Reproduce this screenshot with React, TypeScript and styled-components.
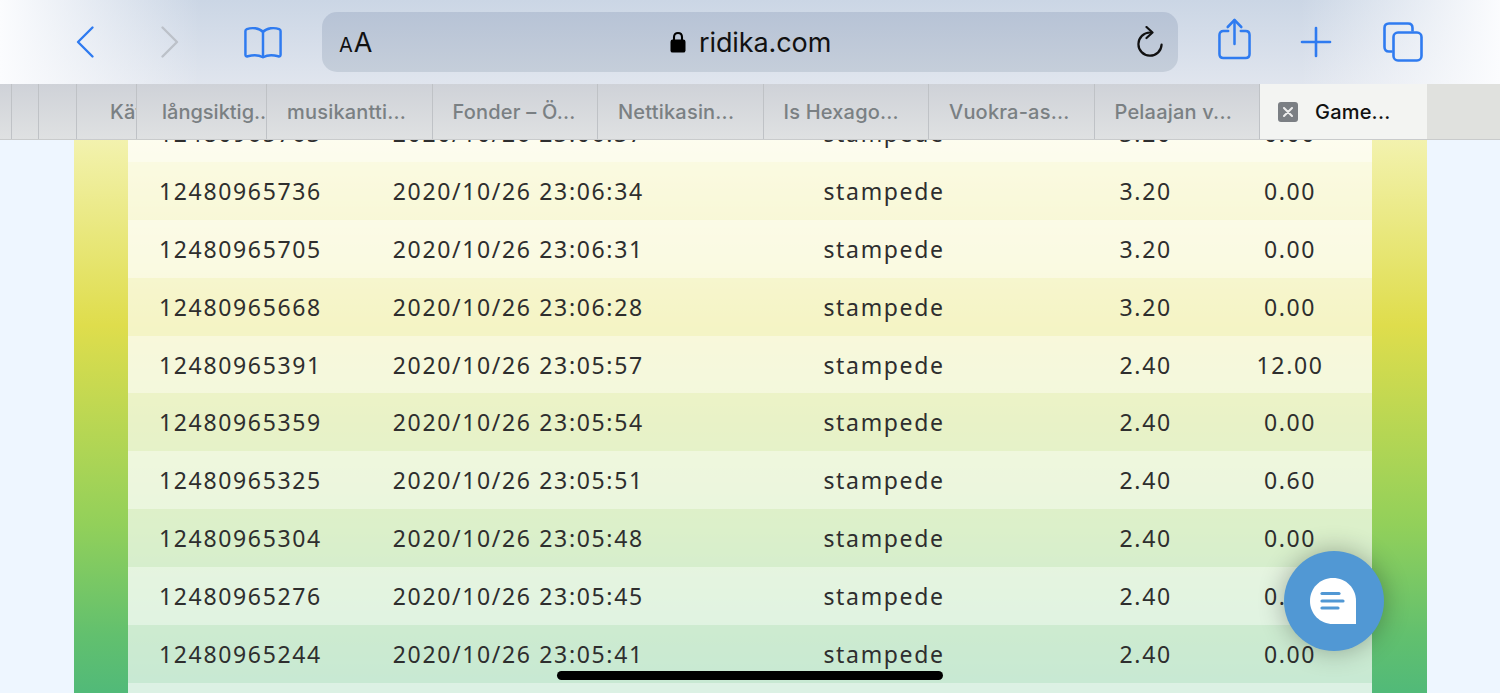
import React from 'react';
import styled, { createGlobalStyle } from 'styled-components';

const GlobalStyle = createGlobalStyle`
  html, body {
    margin: 0;
    padding: 0;
    height: 100%;
    overflow: hidden;
    background: #eef6ff;
  }
`;

const systemFont = '"Inter", "Liberation Sans", sans-serif';

const rows = [
  ['12480965763', '2020/10/26 23:06:37', 'stampede', '3.20', '0.00'],
  ['12480965736', '2020/10/26 23:06:34', 'stampede', '3.20', '0.00'],
  ['12480965705', '2020/10/26 23:06:31', 'stampede', '3.20', '0.00'],
  ['12480965668', '2020/10/26 23:06:28', 'stampede', '3.20', '0.00'],
  ['12480965391', '2020/10/26 23:05:57', 'stampede', '2.40', '12.00'],
  ['12480965359', '2020/10/26 23:05:54', 'stampede', '2.40', '0.00'],
  ['12480965325', '2020/10/26 23:05:51', 'stampede', '2.40', '0.60'],
  ['12480965304', '2020/10/26 23:05:48', 'stampede', '2.40', '0.00'],
  ['12480965276', '2020/10/26 23:05:45', 'stampede', '2.40', '0.00'],
  ['12480965244', '2020/10/26 23:05:41', 'stampede', '2.40', '0.00'],
  ['', '', '', '', ''],
];

const tabs = ['långsiktig..', 'musikantti...', 'Fonder – Ö...', 'Nettikasin...', 'Is Hexago...', 'Vuokra-as...', 'Pelaajan v...'];

const BackIcon = () => (
  <svg width="20" height="34" viewBox="0 0 20 34" fill="none" stroke="#2f7bf0" strokeWidth="2.4" strokeLinecap="round" strokeLinejoin="round">
    <path d="M16.5 2.5 L2 17 L16.5 31.5" />
  </svg>
);

const ForwardIcon = () => (
  <svg width="20" height="34" viewBox="0 0 20 34" fill="none" stroke="#bcc1c9" strokeWidth="2.4" strokeLinecap="round" strokeLinejoin="round">
    <path d="M3.5 2.5 L18 17 L3.5 31.5" />
  </svg>
);

const BookIcon = () => (
  <svg width="38" height="33" viewBox="0 0 40 34" fill="none" stroke="#2f7bf0" strokeWidth="2.6" strokeLinecap="round" strokeLinejoin="round">
    <path d="M20 6 C16 1.5 8 1 3 3 C2 3.4 1.5 4 1.5 5 L1.5 30 C1.5 31.5 2.5 32 4 31.5 C9 30 15.5 30 20 32.5 C24.5 30 31 30 36 31.5 C37.5 32 38.5 31.5 38.5 30 L38.5 5 C38.5 4 38 3.4 37 3 C32 1 24 1.5 20 6 Z" />
    <path d="M20 6 L20 32" />
  </svg>
);

const LockIcon = () => (
  <svg width="16" height="22" viewBox="0 0 16 22">
    <path d="M4 9 V6.2 C4 3.4 5.7 2 8 2 C10.3 2 12 3.4 12 6.2 V9" fill="none" stroke="#000" strokeWidth="2.1" />
    <rect x="0.5" y="8.6" width="15" height="13" rx="2.2" fill="#000" />
  </svg>
);

const ReloadIcon = () => (
  <svg width="28" height="32" viewBox="0 0 28 32" fill="none" stroke="#111" strokeWidth="2.2" strokeLinecap="round" strokeLinejoin="round">
    <path d="M14 6.5 A11.6 11.6 0 1 0 25.6 18.6" />
    <path d="M10.5 1 L16.5 6.5 L10.5 12" />
  </svg>
);

const ShareIcon = () => (
  <svg width="33" height="42" viewBox="0 0 34 42" preserveAspectRatio="none" fill="none" stroke="#2f7bf0" strokeWidth="2.6" strokeLinecap="round" strokeLinejoin="round">
    <path d="M10.5 13 H5.5 C3 13 1.5 14.5 1.5 17 V36 C1.5 38.6 3 40 5.5 40 H28.5 C31 40 32.5 38.6 32.5 36 V17 C32.5 14.5 31 13 28.5 13 H23.5" />
    <path d="M17 26 V2.5" />
    <path d="M10 9 L17 2 L24 9" />
  </svg>
);

const PlusIcon = () => (
  <svg width="32" height="32" viewBox="0 0 32 32" fill="none" stroke="#2f7bf0" strokeWidth="2.6" strokeLinecap="round">
    <path d="M16 2 V30" />
    <path d="M2 16 H30" />
  </svg>
);

const TabsIcon = () => (
  <svg width="40" height="40" viewBox="0 0 40 40" fill="none" stroke="#2f7bf0" strokeWidth="2.6" strokeLinejoin="round">
    <path d="M9.5 29.5 H6 C3 29.5 1.5 28 1.5 25 V6 C1.5 3 3 1.5 6 1.5 H25 C28 1.5 29.5 3 29.5 6 V9.5" />
    <rect x="10.5" y="10.5" width="28" height="28" rx="4.5" />
  </svg>
);

const ChatIcon = () => (
  <svg width="46" height="46" viewBox="0 0 46 46">
    <path d="M23 0 C36 0 46 10 46 23 V46 H23 C10 46 0 36 0 23 C0 10 10 0 23 0 Z" fill="#fff" />
    <path d="M12 15.5 H29" stroke="#5198d4" strokeWidth="3.2" strokeLinecap="round" />
    <path d="M12 23 H33" stroke="#5198d4" strokeWidth="3.2" strokeLinecap="round" />
    <path d="M12 30 H28" stroke="#5198d4" strokeWidth="3.2" strokeLinecap="round" />
  </svg>
);

export default function App() {
  return (
    <Page>
      <GlobalStyle />
      <Column>
        <Table>
          {rows.map((row, i) => (
            <Row key={i} light={i % 2 === 0}>
              <IdCell>{row[0]}</IdCell>
              <DateCell>{row[1]}</DateCell>
              <GameCell>{row[2]}</GameCell>
              <BetCell>{row[3]}</BetCell>
              <WinCell>{row[4]}</WinCell>
            </Row>
          ))}
        </Table>
      </Column>

      <Header>
        <Toolbar>
          <NavGroup>
            <BackIcon />
            <ForwardIcon />
            <BookIcon />
          </NavGroup>
          <AddressBar>
            <FontSize><small>A</small>A</FontSize>
            <Domain><LockIcon /><span>ridika.com</span></Domain>
            <ReloadIcon />
          </AddressBar>
          <ActionGroup>
            <ShareIcon />
            <PlusIcon />
            <TabsIcon />
          </ActionGroup>
        </Toolbar>
        <TabStrip>
          <StubTab width={12} />
          <StubTab width={27} />
          <StubTab width={38} />
          <PeekTab>Kät</PeekTab>
          {tabs.map((t, i) => (
            <Tab key={t} first={i === 0}>{t}</Tab>
          ))}
          <ActiveTab>
            <CloseBox>
              <svg width="10" height="10" viewBox="0 0 10 10" stroke="#eee" strokeWidth="2" strokeLinecap="round">
                <path d="M1 1 L9 9 M9 1 L1 9" />
              </svg>
            </CloseBox>
            Game...
          </ActiveTab>
          <TabFill />
        </TabStrip>
      </Header>

      <ChatButton><ChatIcon /></ChatButton>
      <HomeBar />
    </Page>
  );
}

const Page = styled.div`
  position: relative;
  width: 1500px;
  height: 693px;
  overflow: hidden;
  background: #eef6ff;
  padding: 0 73px 0 74px;
  box-sizing: border-box;
`;

const Column = styled.div`
  height: 100%;
  padding: 104px 55px 0 54px;
  box-sizing: border-box;
  background: linear-gradient(180deg, #fbfbd8 60px, #dfdd4c 325px, #92d05a 525px, #62c06e 635px, #52ba78 690px);
`;

const Table = styled.div`
  display: flex;
  flex-direction: column;
`;

const Row = styled.div<{ light: boolean }>`
  height: 57.9px;
  flex: none;
  display: flex;
  align-items: center;
  padding-left: 31px;
  background: ${(props) => props.light ? 'rgba(255, 255, 255, 0.8)' : 'rgba(255, 255, 255, 0.68)'};
  font-family: "Noto Sans", "Open Sans", sans-serif;
  font-size: 23px;
  letter-spacing: 1.65px;
  color: #2e2e2e;
  white-space: nowrap;
`;

const IdCell = styled.div`
  width: 234px;
`;

const DateCell = styled.div`
  width: 431px;
`;

const GameCell = styled.div`
  width: 260px;
`;

const BetCell = styled.div`
  width: 125px;
  text-align: center;
`;

const WinCell = styled.div`
  width: 164px;
  text-align: center;
`;

const Header = styled.div`
  position: absolute;
  top: 0;
  left: 0;
  width: 1500px;
  font-family: ${systemFont};
`;

const Toolbar = styled.div`
  height: 84px;
  box-sizing: border-box;
  display: flex;
  align-items: center;
  padding-left: 76px;
  background:
    linear-gradient(90deg, #fbfcfe 0, rgba(251, 252, 254, 0) 200px, rgba(251, 252, 254, 0) 1300px, #fbfcfe 1500px),
    linear-gradient(180deg, #cbd6e5 0, #e0e5ee 100%);
`;

const NavGroup = styled.div`
  width: 246px;
  display: flex;
  align-items: center;
  gap: 63px;
  flex: none;

  svg:nth-child(3) {
    margin-left: 1.5px;
  }
`;

const AddressBar = styled.div`
  width: 856px;
  height: 60px;
  flex: none;
  display: flex;
  align-items: center;
  justify-content: space-between;
  position: relative;
  padding: 0 14px 0 17px;
  box-sizing: border-box;
  border-radius: 15px;
  background: linear-gradient(180deg, #b7c3d6 0, #c5ceda 100%);
`;

const FontSize = styled.div`
  font-size: 27px;
  line-height: 1;
  color: #111;

  small {
    font-size: 20px;
    margin-right: 1px;
  }
`;

const Domain = styled.div`
  position: absolute;
  left: 348px;
  display: flex;
  align-items: center;
  gap: 13px;
  font-size: 27px;
  letter-spacing: -0.1px;
  color: #111;
`;

const ActionGroup = styled.div`
  flex: 1;
  display: flex;
  align-items: center;
  gap: 49.5px;
  padding-left: 39.5px;

  svg:nth-child(1) {
    margin-top: -6px;
  }

  svg:nth-child(3) {
    margin-left: 1px;
  }
`;

const TabStrip = styled.div`
  height: 56px;
  box-sizing: border-box;
  display: flex;
  background: linear-gradient(180deg, #cfd2d8 0, #dfe1e2 100%);
  border-bottom: 1px solid #c9cbcc;
  font-size: 20px;
  font-weight: 500;
  letter-spacing: 0.2px;
  color: #7a8083;
  white-space: nowrap;
`;

const StubTab = styled.div<{ width: number }>`
  width: ${(props) => props.width}px;
  flex: none;
  box-sizing: border-box;
  border-right: 1px solid #bfc2c6;
`;

const PeekTab = styled.div`
  width: 60px;
  flex: none;
  box-sizing: border-box;
  padding-left: 33px;
  overflow: hidden;
  display: flex;
  align-items: center;
  border-right: 1px solid #bfc2c6;
`;

const Tab = styled.div<{ first: boolean }>`
  width: ${(props) => props.first ? 130 : 165.5}px;
  flex: none;
  box-sizing: border-box;
  display: flex;
  align-items: center;
  padding-left: ${(props) => props.first ? 25 : 20}px;
  letter-spacing: ${(props) => props.first ? 0 : 0.2}px;
  border-right: 1px solid #bfc2c6;
  overflow: hidden;
`;

const ActiveTab = styled.div`
  width: 167px;
  flex: none;
  box-sizing: border-box;
  display: flex;
  align-items: center;
  padding-left: 18px;
  gap: 17px;
  color: #111;
  background: #f3f4f2;
`;

const CloseBox = styled.div`
  width: 20px;
  height: 20px;
  border-radius: 3px;
  background: #7b7f84;
  display: flex;
  align-items: center;
  justify-content: center;
`;

const TabFill = styled.div`
  flex: 1;
  background: #e0e1de;
`;

const ChatButton = styled.div`
  position: absolute;
  left: 1284px;
  top: 551px;
  width: 100px;
  height: 100px;
  box-sizing: border-box;
  padding-right: 3px;
  border-radius: 50%;
  background: #5198d4;
  display: flex;
  align-items: center;
  justify-content: center;
  box-shadow: 0 0 26px rgba(0, 0, 0, 0.3);
`;

const HomeBar = styled.div`
  position: absolute;
  left: 557px;
  bottom: 13px;
  width: 386px;
  height: 9px;
  border-radius: 5px;
  background: #000;
`;
